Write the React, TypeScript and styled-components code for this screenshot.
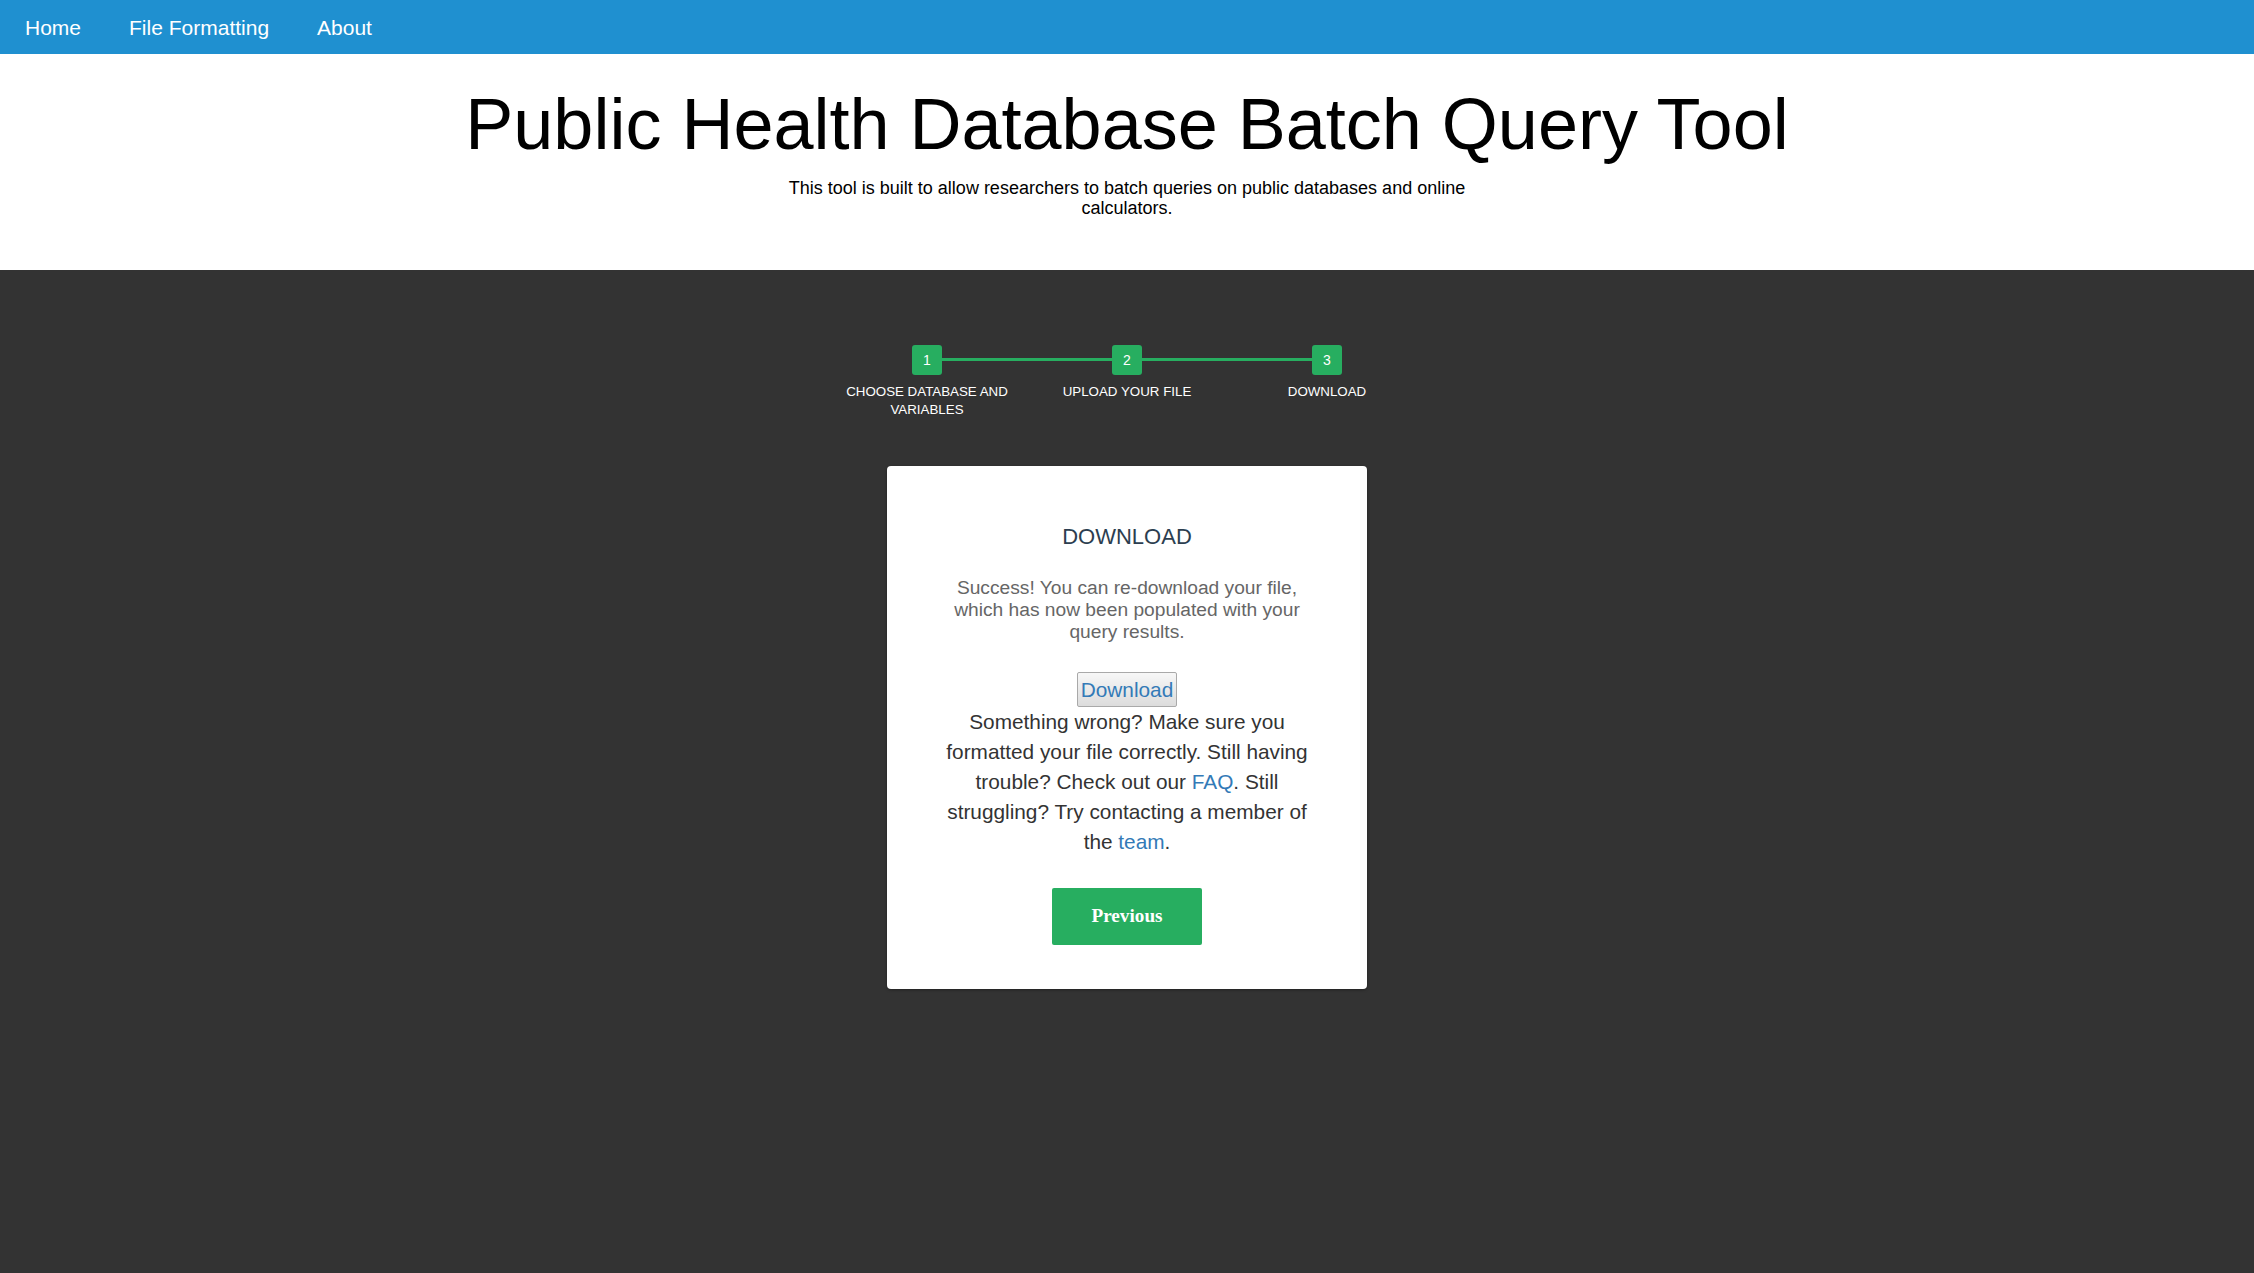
import React from "react";
import styled, { createGlobalStyle } from "styled-components";

const GlobalStyle = createGlobalStyle`
  html, body {
    margin: 0;
    padding: 0;
    background: #333333;
    font-family: "Liberation Sans", Arial, sans-serif;
  }
  #root {
    min-height: 100vh;
    background: #333333;
  }
`;

const NavBar = styled.nav`
  box-sizing: border-box;
  height: 54px;
  padding: 2px 0 0 1px;
  background: #1f90d0;
  display: flex;
  align-items: center;
`;

const NavLink = styled.a`
  color: #ffffff;
  font-size: 21px;
  padding: 0 24px;
  text-decoration: none;
  line-height: 52px;
`;

const Header = styled.header`
  background: #ffffff;
  padding: 29px 0 52px;
  text-align: center;
`;

const Title = styled.h1`
  margin: 0;
  font-size: 72px;
  line-height: 83px;
  font-weight: normal;
  color: #000;
`;

const Subtitle = styled.p`
  margin: 12px auto 0;
  max-width: 720px;
  font-size: 18px;
  line-height: 20px;
  color: #000;
`;

const Main = styled.main`
  padding: 75px 0 60px;
`;

const Stepper = styled.ol`
  list-style: none;
  margin: 0 auto;
  padding: 0;
  width: 600px;
  display: grid;
  grid-template-columns: repeat(3, 200px);
`;

const Step = styled.li`
  position: relative;
  display: flex;
  flex-direction: column;
  align-items: center;
  text-align: center;

  &:not(:first-child)::before {
    content: "";
    position: absolute;
    top: 13px;
    left: -50%;
    right: 50%;
    height: 3px;
    background: #27ae60;
    z-index: 0;
  }
`;

const StepBox = styled.span`
  position: relative;
  z-index: 1;
  width: 30px;
  height: 30px;
  border-radius: 3px;
  background: #27ae60;
  color: #ffffff;
  font-size: 14px;
  line-height: 30px;
  text-align: center;
`;

const StepLabel = styled.span`
  margin-top: 8px;
  color: #ffffff;
  font-size: 13.33px;
  line-height: 18px;
  text-transform: uppercase;
`;

const Card = styled.section`
  box-sizing: border-box;
  width: 480px;
  margin: 47px auto 0;
  padding: 48px 48px 44px;
  background: #ffffff;
  border-radius: 4px;
  box-shadow: 0 1px 3px rgba(0, 0, 0, 0.35);
  text-align: center;
`;

const CardTitle = styled.h3`
  margin: 10px 0 27px;
  font-size: 22px;
  line-height: 26px;
  font-weight: normal;
  color: #2c3e50;
`;

const Lead = styled.p`
  margin: 0 0 28.5px;
  font-size: 19.2px;
  line-height: 22px;
  color: #666666;
`;

const DownloadButton = styled.button`
  display: block;
  margin: 0 auto;
  padding: 4px 3px;
  border: 1px solid #a9a9a9;
  border-radius: 2px;
  background: linear-gradient(#f7f7f7, #dcdcdc);
  color: #337ab7;
  font-family: "Liberation Sans", Arial, sans-serif;
  font-size: 20.8px;
  line-height: 25px;
  cursor: pointer;
`;

const Help = styled.p`
  margin: 0;
  font-size: 20.8px;
  line-height: 30px;
  color: #333333;
`;

const Link = styled.a`
  color: #337ab7;
  text-decoration: none;
`;

const PrevButton = styled.button`
  display: block;
  margin: 31px auto 0;
  width: 150px;
  height: 57px;
  border: none;
  border-radius: 2px;
  background: #27ae60;
  color: #ffffff;
  font-family: "Liberation Serif", "Times New Roman", serif;
  font-weight: bold;
  font-size: 19.2px;
  cursor: pointer;
`;

const steps = ["Choose database and variables", "Upload your file", "Download"];

export default function App() {
  return (
    <>
      <GlobalStyle />
      <NavBar>
        <NavLink href="#">Home</NavLink>
        <NavLink href="#">File Formatting</NavLink>
        <NavLink href="#">About</NavLink>
      </NavBar>
      <Header>
        <Title>Public Health Database Batch Query Tool</Title>
        <Subtitle>
          This tool is built to allow researchers to batch queries on public databases and online
          calculators.
        </Subtitle>
      </Header>
      <Main>
        <Stepper>
          {steps.map((s, i) => (
            <Step key={s}>
              <StepBox>{i + 1}</StepBox>
              <StepLabel>{s}</StepLabel>
            </Step>
          ))}
        </Stepper>
        <Card>
          <CardTitle>DOWNLOAD</CardTitle>
          <Lead>
            Success! You can re-download your file, which has now been populated with your query
            results.
          </Lead>
          <DownloadButton type="button">Download</DownloadButton>
          <Help>
            Something wrong? Make sure you formatted your file correctly. Still having trouble?
            Check out our <Link href="#">FAQ</Link>. Still struggling? Try contacting a member of
            the <Link href="#">team</Link>.
          </Help>
          <PrevButton type="button">Previous</PrevButton>
        </Card>
      </Main>
    </>
  );
}
